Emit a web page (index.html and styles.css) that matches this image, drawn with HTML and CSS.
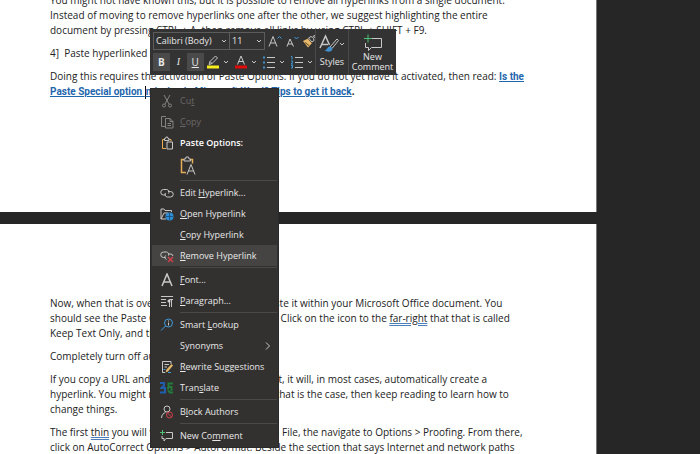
FILE: index.html
```html
<!DOCTYPE html>
<html lang="en">
<head>
  <meta charset="UTF-8" />
  <meta name="viewport" content="width=device-width, initial-scale=1.0"/>
  <title>Document</title>
  <link rel="stylesheet" href="styles.css">
</head>
<body>

<main class="document">
  <section class="page page-first">
    <p>You might not have known this, but it is possible to remove all hyperlinks from a single document.<br>
      Instead of moving to remove hyperlinks one after the other, we suggest highlighting the entire<br>
      document by pressing CTRL + A, then remove all links by using CTRL + SHIFT + F9.</p>
    <p>4]&nbsp; Paste hyperlinked text</p>
    <p>Doing this requires the activation of Paste Options. If you do not yet have it activated, then read: <a href="#">Is the</a><br>
      <a href="#">Paste Special option <span class="caret"></span>missing in Microsoft Word? Tips to get it back</a><b>.</b></p>
  </section>

  <section class="page page-second">
    <p>Now, when that is over, copy the content and paste it within your Microsoft Office document. You<br>
      should see the Paste Options icons on the pages. Click on the icon to the <span class="grammar">far-right</span> that that is called<br>
      Keep Text Only, and that is it.</p>
    <p>Completely turn off automatic links</p>
    <p>If you copy a URL and paste it into your document, it will, in most cases, automatically create a<br>
      hyperlink. You might not want that to happen. If that is the case, then keep reading to learn how to<br>
      change things.</p>
    <p>The first <span class="grammar">thin</span> you will want to do first is to click on File, the navigate to Options &gt; Proofing. From there,<br>
      click on AutoCorrect Options &gt; AutoFormat. Beside the section that says Internet and network paths</p>
  </section>
</main>

<div class="toolbar">
  <div class="format">
    <div class="row">
      <div class="fonts">
        <select class="font-name" aria-label="Font"><option>Calibri (Body)</option></select>
        <select class="font-size" aria-label="Font size"><option>11</option></select>
      </div>
      <button class="tool" aria-label="Grow font">
        <svg width="14" height="14" viewBox="0 0 14 14"><path d="M1 12.500 5 2.500l4 10M2.500 9h5" class="ink"/><path d="M9.500 4.500l2-2 2 2" class="blue"/></svg>
      </button>
      <button class="tool" aria-label="Shrink font">
        <svg width="14" height="14" viewBox="0 0 14 14"><path d="M2 12.500 5 5l3.500 7.500M3 10h4.500" class="ink"/><path d="M9.500 3l2 2 2-2" class="blue"/></svg>
      </button>
      <button class="tool" aria-label="Format painter">
        <svg width="14" height="14" viewBox="0 0 14 14"><path d="M1 7l5-2.500L10 9l-4 4.500z" fill="#e8b968"/><path d="M3 8.500l4 3M6 4.500 10 9" stroke="#59482e" fill="none"/><path d="M6.500 4 9 2.500l1.500 1L12.500 1l1 1-2 2.500.5 2L10 8z" class="ink"/></svg>
      </button>
    </div>
    <div class="row marks">
      <button class="tool pressed"><b>B</b></button>
      <button class="tool"><i>I</i></button>
      <button class="tool pressed"><u>U</u></button>
      <button class="tool split" aria-label="Highlight">
        <svg width="14" height="14" viewBox="0 0 14 14"><path d="M3 9.500l1-3L9.500 1l2 2L6 8.500zM4 6.500l2 2" class="ink"/><path d="M1 10.500h12v3H1z" fill="#f7ee1c"/></svg>
        <svg width="6" height="4" viewBox="0 0 6 4"><path d="M1 1l2 2 2-2" class="chevron"/></svg>
      </button>
      <button class="tool split" aria-label="Font color">
        <svg width="14" height="14" viewBox="0 0 14 14"><path d="M3.500 9.500 7 1l3.500 8.500M4.500 6.500h5" class="ink"/><path d="M1 10.500h12v3H1z" fill="#e00b0b"/></svg>
        <svg width="6" height="4" viewBox="0 0 6 4"><path d="M1 1l2 2 2-2" class="chevron"/></svg>
      </button>
      <button class="tool split" aria-label="Bullets">
        <svg width="14" height="14" viewBox="0 0 14 14"><path d="M5 2.500h8M5 7.500h8M5 12.500h8" class="ink"/><path d="M1 1.500h2v2H1zM1 6.500h2v2H1zM1 11.500h2v2H1z" fill="#3f8fce"/></svg>
        <svg width="6" height="4" viewBox="0 0 6 4"><path d="M1 1l2 2 2-2" class="chevron"/></svg>
      </button>
      <button class="tool split" aria-label="Numbering">
        <svg width="14" height="14" viewBox="0 0 14 14"><path d="M5 2.500h8M5 7.500h8M5 12.500h8" class="ink"/><path d="M1 1.500h1v3M1 6h1.500v1.500L1 9h2M1 10.500h1.500V13H1" class="blue"/></svg>
        <svg width="6" height="4" viewBox="0 0 6 4"><path d="M1 1l2 2 2-2" class="chevron"/></svg>
      </button>
    </div>
  </div>
  <button class="big styles">
    <span class="art">
      <svg width="20" height="20" viewBox="0 0 20 20"><path d="M1 14 6.500 2l4 9M3 10.500h6" class="ink bold"/><path d="M11 13 18 5l1.500 1.500L13 14.500z" class="ink"/><path d="M11 12.500c-3 0-2.500 3.500-5.500 4 3 2 8 1.500 8-2z" fill="#3f8fce"/></svg>
      <svg width="6" height="4" viewBox="0 0 6 4"><path d="M1 1l2 2 2-2" class="chevron"/></svg>
    </span>
    Styles
  </button>
  <button class="big comment">
    <svg width="20" height="18" viewBox="0 0 20 18"><path d="M8 4.500h10.500v9H8.500L5.500 16.500v-3h-3V9" class="ink"/><path d="M1 4.500h8M5 .5v8" class="green"/></svg>
    New<br>Comment
  </button>
</div>

<div class="menu" role="menu">
  <button class="item disabled" disabled>
    <svg class="icon" width="14" height="14" viewBox="0 0 14 14"><path d="M4 1l5 9M10 1 5 10" class="ink"/><circle cx="4" cy="11.500" r="1.500" class="ink"/><circle cx="10" cy="11.500" r="1.500" class="ink"/></svg>
    <span>Cu<u>t</u></span>
  </button>
  <button class="item disabled" disabled>
    <svg class="icon" width="14" height="14" viewBox="0 0 14 14"><path d="M5 11.500H1.500v-10H6M5.500 3.500H10l3 3v6.500H5.500zM10 3.500v3h3M7.500 8.500h3.500M7.500 10.500h3.500" class="ink"/></svg>
    <span><u>C</u>opy</span>
  </button>
  <div class="item heading">
    <svg class="icon" width="14" height="14" viewBox="0 0 14 14"><path d="M6 12.500H2.500v-9h2M9 3.500h2v2" class="gold"/><path d="M4.500 4.500v-2h1L6 1h1.500L8 2.500h1v2zM7 6h5.500v7H7z" class="ink"/></svg>
    <span>Paste Options:</span>
  </div>
  <div class="paste">
    <button class="tool" aria-label="Keep text only">
      <svg width="16" height="20" viewBox="0 0 16 20"><path d="M6 16.500H1.500v-13H4M10 3.500h2.500v4" class="gold bold"/><path d="M4 5V3h1.500l.5-2h2.500L9 3h1.500v2zM7 18.500l4-10 4 10M8.500 15h5" class="ink"/></svg>
    </button>
  </div>
  <hr>
  <button class="item">
    <svg class="icon" width="14" height="14" viewBox="0 0 14 14"><path d="M6 9H3.500a2.500 2.500 0 0 1 0-5.500h3A2.500 2.500 0 0 1 8.500 7.500M8 5.500h2.500a2.500 2.500 0 0 1 0 5.500h-3A2.500 2.500 0 0 1 5.500 7" class="ink"/></svg>
    <span>Edit <u>H</u>yperlink...</span>
  </button>
  <button class="item">
    <svg class="icon" width="14" height="14" viewBox="0 0 14 14"><path d="M1 12V2h3l1 1.500h6.500V5M1 12l3-6h4M1 12h5" class="ink"/><circle cx="9.500" cy="9.500" r="4" fill="#2e8fd6"/><path d="M6 9.500h7M9.500 6v7" stroke="#1c5685" fill="none"/></svg>
    <span><u>O</u>pen Hyperlink</span>
  </button>
  <button class="item">
    <span class="icon"></span>
    <span><u>C</u>opy Hyperlink</span>
  </button>
  <button class="item active">
    <svg class="icon" width="14" height="14" viewBox="0 0 14 14"><path d="M5.500 8.500h-2a2.500 2.500 0 0 1 0-5.500h3A2.500 2.500 0 0 1 8.500 6.500M8 5h2.500a2.500 2.500 0 0 1 2.500 2M6.500 10.500A2.500 2.500 0 0 1 5.500 6.500" class="ink"/><path d="M8 8l5 5M13 8l-5 5" class="red bold"/></svg>
    <span><u>R</u>emove Hyperlink</span>
  </button>
  <hr>
  <button class="item">
    <svg class="icon" width="14" height="14" viewBox="0 0 14 14"><path d="M2 13 7 1l5 12M3.500 9h7" class="ink bold"/></svg>
    <span><u>F</u>ont...</span>
  </button>
  <button class="item">
    <svg class="icon" width="14" height="14" viewBox="0 0 14 14"><path d="M1 2.500h12M1 5.500h5M1 8.500h5M1 11.500h6M9.500 13V5.500H13M11.500 5.500V13" class="ink"/><circle cx="9" cy="7" r="1.500" fill="#d0d0d0"/></svg>
    <span><u>P</u>aragraph...</span>
  </button>
  <hr>
  <button class="item">
    <svg class="icon" width="14" height="14" viewBox="0 0 14 14"><circle cx="8.500" cy="5" r="4" class="blue"/><path d="M5.500 8 1 12.500" class="blue"/><path d="M8.500 4.500v3M8.500 2.500v1" class="ink"/></svg>
    <span>Smart <u>L</u>ookup</span>
  </button>
  <button class="item">
    <span class="icon"></span>
    <span>Synonyms</span>
    <svg class="arrow" width="6" height="8" viewBox="0 0 6 8"><path d="M1 .5 4.500 4 1 7.500" class="ink"/></svg>
  </button>
  <button class="item">
    <svg class="icon" width="14" height="14" viewBox="0 0 14 14"><path d="M11 4V1.500H2.500v11H5M4.500 4.500H9M4.500 7H7" class="ink"/><path d="M5.500 12.500l1-3L11.500 4l1.500 1.500-5 6z" fill="#e3b567"/><path d="M3.500 9.500h2M8 12.500h3" class="blue"/></svg>
    <span><u>R</u>ewrite Suggestions</span>
  </button>
  <button class="item">
    <svg class="icon" width="14" height="14" viewBox="0 0 14 14"><path d="M0 2h4v2.500L1.500 7H5v4.500H0" stroke="#1f5fae" stroke-width="2" fill="none"/><path d="M13 2.500H8.500V6h3v4M8 9.500l2 2h3M7 7.500h2" stroke="#237a3b" stroke-width="2" fill="none"/></svg>
    <span>Tran<u>s</u>late</span>
  </button>
  <hr>
  <button class="item">
    <svg class="icon" width="14" height="14" viewBox="0 0 14 14"><circle cx="7" cy="4" r="3" class="ink"/><path d="M1.500 13c0-3 2-5 4-5.500" class="ink"/><circle cx="9.500" cy="10" r="3" class="red"/><path d="M7.500 8l4 4" class="red"/></svg>
    <span>B<u>l</u>ock Authors</span>
  </button>
  <hr>
  <button class="item">
    <svg class="icon" width="14" height="14" viewBox="0 0 14 14"><path d="M6 3.500h6.500v6H6L4 12V9.500H2V7" class="ink"/><path d="M0 3.500h5M2.500 1v5" class="green"/></svg>
    <span>New Co<u>m</u>ment</span>
  </button>
</div>

</body>
</html>
```
FILE: styles.css
```css
body {
  margin: 0;
  height: 100vh;
  overflow: hidden;
  background: #262626;
  font-family: "Open Sans", "Noto Sans", sans-serif;
  color: #e8e8e8;
}

/* document */
.document {
  display: flex;
  flex-direction: column;
  gap: 12px;
  height: 100vh;
  margin-right: 103px;
  overflow: hidden;
  font-size: 10px;
  line-height: 15px;
  color: #222;
}
.page {
  box-sizing: border-box;
  padding-left: 50px;
  background: #fff;
  border-right: 1px solid #777;
  white-space: nowrap;
  overflow: hidden;
}
.page-first {
  flex: none;
  height: 212px;
}
.page-first p:first-child {
  margin-top: -7px;
}
.page-second {
  flex: 1;
  padding-top: 72px;
}
.page p {
  margin: 0 0 8px;
}
.page a {
  color: #1f66ad;
  font-family: Roboto, sans-serif;
  font-weight: bold;
}
.grammar {
  text-decoration: underline double #4a7ebb;
}
.caret {
  display: inline-block;
  width: 1px;
  height: 13px;
  background: #111;
  vertical-align: middle;
}

/* shared controls */
button, select {
  margin: 0;
  padding: 0;
  border: none;
  background: none;
  color: inherit;
  font: inherit;
}
svg {
  flex: none;
  fill: none;
}
.ink, .blue, .gold, .red, .green, .chevron {
  fill: none;
  stroke: #c8c8c8;
}
.bold { stroke-width: 1.5; }
.blue { stroke: #3f9bdc; }
.gold { stroke: #e5ad55; }
.red { stroke: #d13f4a; }
.green { stroke: #4fc173; }

/* floating toolbar */
.toolbar {
  position: absolute;
  left: 150px;
  top: 29px;
  box-sizing: border-box;
  height: 46px;
  display: flex;
  background: #333;
  font-size: 9px;
  line-height: 10px;
}
.format {
  display: flex;
  flex-direction: column;
  gap: 3px;
  padding: 3px 0 0 3px;
  width: 162px;
}
.row {
  display: flex;
  align-items: center;
  gap: 3px;
  height: 18px;
}
.fonts {
  display: flex;
}
.fonts select {
  appearance: none;
  box-sizing: border-box;
  height: 18px;
  border: 1px solid #5c5c5c;
  padding-left: 2px;
  background: url("data:image/svg+xml,%3Csvg xmlns='http://www.w3.org/2000/svg' width='6' height='4'%3E%3Cpath d='M1 1l2 2 2-2' fill='none' stroke='%23ccc'/%3E%3C/svg%3E") no-repeat right 2px center;
}
.font-name { width: 77px; }
.fonts .font-size {
  width: 35px;
  border-left: none;
}
.tool {
  display: flex;
  align-items: center;
  justify-content: center;
}
.marks {
  gap: 0;
}
.marks .tool {
  width: 17px;
  height: 18px;
  font-size: 10px;
}
.marks .tool i {
  font-family: "Liberation Serif", serif;
}
.marks .pressed {
  background: #4a4a4a;
}
.marks .split {
  width: 28px;
  gap: 3px;
}
.big {
  display: flex;
  flex-direction: column;
  align-items: center;
  border-left: 1px solid #4a4a4a;
}
.styles {
  width: 33px;
  gap: 3px;
  padding-top: 5px;
}
.art {
  display: flex;
  align-items: center;
}
.comment {
  width: 48px;
  padding-top: 5px;
}

/* context menu */
.menu {
  position: absolute;
  left: 150px;
  top: 88px;
  box-sizing: border-box;
  width: 129px;
  padding: 1px;
  border: 1px solid #2a2a2a;
  background: #333130;
  font-size: 9px;
}
.item {
  display: flex;
  align-items: center;
  gap: 6px;
  width: 100%;
  height: 21px;
  padding: 0 6px 0 8px;
  white-space: nowrap;
}
.heading {
  box-sizing: border-box;
  font-weight: 600;
  color: #fff;
}
.icon {
  width: 14px;
}
.arrow {
  margin-left: auto;
}
.item.active {
  background: #454443;
}
.item.disabled {
  color: #6a6866;
}
.disabled .ink {
  stroke: #858381;
}
.paste {
  display: flex;
  align-items: center;
  height: 26px;
  padding-left: 28px;
}
.menu hr {
  height: 1px;
  margin: 1px 0 1px 28px;
  border: none;
  background: #4b4948;
}
```
